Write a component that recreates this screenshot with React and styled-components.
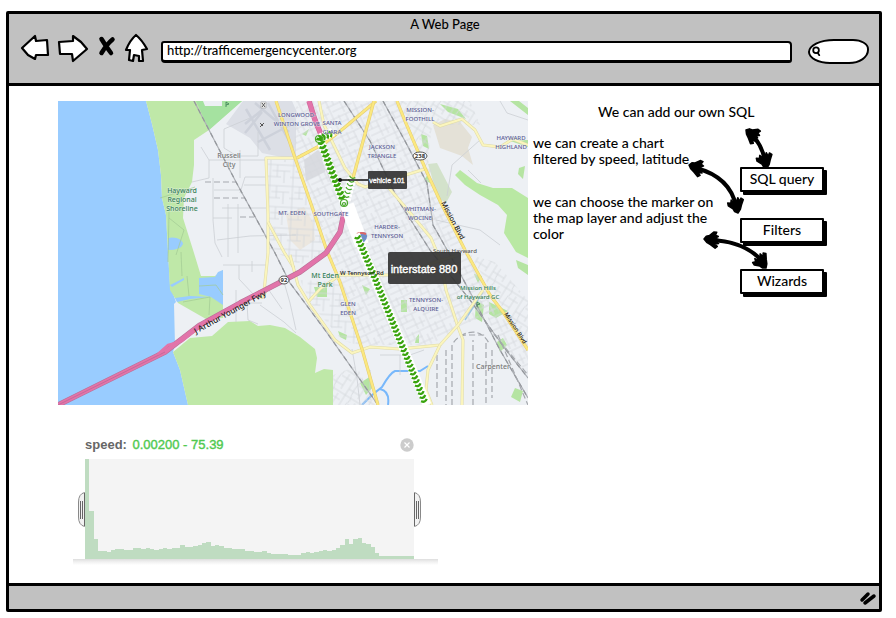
import React from "react";
import styled, { createGlobalStyle } from "styled-components";

const GlobalStyle = createGlobalStyle`
  * { box-sizing: border-box; }
  body { margin: 0; background: #fff; color: #000; font: 500 14px/16px Lato, "Open Sans", sans-serif; }
  button, input { font: inherit; color: inherit; }
`;

const Browser = styled.div`
  display: flex;
  flex-direction: column;
  min-height: calc(100vh - 17px);
  margin: 11px 14px 6px 6px;
  border: 3px solid #000;
  border-radius: 2px;
`;

const Chrome = styled.header`
  background: #c1c1c1;
  border-bottom: 3px solid #000;
  padding: 3px 10px 19px 12px;
`;

const Title = styled.h1`
  margin: 0;
  font-size: 13px;
  line-height: 14px;
  font-weight: 500;
  text-align: center;
`;

const NavRow = styled.div`
  display: flex;
  align-items: center;
  gap: 16px;
`;

const NavButtons = styled.nav`
  display: flex;
  align-items: center;
  gap: 9px;
  width: 124px;
`;

const NavButton = styled.button`
  flex: none;
  padding: 0;
  border: 0;
  background: none;
  display: block;
  svg { display: block; overflow: visible; }
`;

const Address = styled.input`
  flex: 1;
  min-width: 0;
  height: 22px;
  margin-top: 8px;
  padding: 0 4px 2px;
  border: 2px solid #000;
  border-bottom-width: 3px;
  border-radius: 3px 4px 3px 4px;
  background: #fff;
  font-size: 13px;
`;

const Search = styled.label`
  flex: none;
  display: flex;
  align-items: center;
  width: 61px;
  height: 25px;
  margin-top: 8px;
  padding-left: 2px;
  border: 2px solid #000;
  border-radius: 26px 16px 20px 22px / 13px 10px 14px 12px;
  background: #fff;
`;

const SearchInput = styled.input`
  min-width: 0;
  width: 100%;
  border: 0;
  outline: 0;
  background: transparent;
`;

const Page = styled.main`
  flex: 1;
  display: grid;
  grid-template-columns: minmax(0, 470fr) minmax(0, 351fr);
  align-items: start;
  padding: 15px 0 18px 49px;
`;

const MapFigure = styled.figure`
  margin: 0;
  svg { display: block; width: 100%; }
`;

const Filter = styled.section`
  margin: 32px 90px 0 15px;
`;

const FilterHead = styled.div`
  display: flex;
  align-items: center;
  justify-content: space-between;
  height: 16px;
  padding: 0 24px 0 12px;
  font-family: "Liberation Sans", Arial, sans-serif;
`;

const FilterName = styled.h2`
  margin: 0;
  font-size: 13px;
  line-height: 16px;
  color: #666;
  span { color: #4fc94f; margin-left: 2px; font-weight: 400; -webkit-text-stroke: 0.4px #4fc94f; }
`;

const Close = styled.button`
  width: 14px;
  height: 14px;
  padding: 0;
  border: 0;
  background: none;
  svg { display: block; }
`;

const Plot = styled.div`
  position: relative;
  height: 100px;
  margin: 6px 24px 0 12px;
  background: #f4f4f4;
  & > svg { display: block; width: 100%; height: 100%; }
`;

const Handle = styled.button`
  position: absolute;
  top: 33px;
  ${(p) => (p.$side === "left" ? "right: 100%;" : "left: 100%;")}
  width: 7px;
  height: 35px;
  padding: 0;
  border: 0;
  background: none;
  svg { display: block; transform: ${(p) => (p.$side === "left" ? "none" : "scaleX(-1)")}; }
`;

const Shelf = styled.div`
  height: 6px;
  background: linear-gradient(#dedede, #eee 40%, #fff);
`;

const Notes = styled.section`
  position: relative;
  padding: 3px 0 0 5px;
`;

const Intro = styled.p`
  margin: 0 0 15px 65px;
`;

const NoteGrid = styled.div`
  display: grid;
  grid-template-columns: 180px 84px;
  column-gap: 27px;
`;

const NoteList = styled.div`
  display: grid;
  align-content: start;
  gap: 27px;
  p { margin: 0; white-space: nowrap; }
`;

const Actions = styled.div`
  display: flex;
  flex-direction: column;
  gap: 26px;
  padding-top: 32px;
`;

const Action = styled.button`
  height: 25px;
  padding: 0 0 1px;
  border: 2px solid #000;
  border-radius: 1px;
  background: #fff;
  box-shadow: 3px 3px 0 #000;
  font-weight: 500;
`;

const ArrowLayer = styled.svg`
  position: absolute;
  top: 0;
  left: 0;
  pointer-events: none;
`;

const Status = styled.footer`
  display: flex;
  justify-content: flex-end;
  align-items: center;
  height: 26px;
  padding-right: 2px;
  border-top: 3px solid #000;
  background: #c1c1c1;
`;

/* ---------- map ---------- */

function chevrons(points, step, size) {
  const out = [];
  let carry = 0;
  for (let i = 1; i < points.length; i++) {
    const [x1, y1] = points[i - 1];
    const [x2, y2] = points[i];
    const len = Math.hypot(x2 - x1, y2 - y1);
    const a = (Math.atan2(y2 - y1, x2 - x1) * 180) / Math.PI;
    let d = carry;
    for (; d < len; d += step) {
      const x = x1 + ((x2 - x1) * d) / len;
      const y = y1 + ((y2 - y1) * d) / len;
      out.push(
        <path
          key={`${i}-${d}`}
          transform={`translate(${x.toFixed(1)} ${y.toFixed(1)}) rotate(${a.toFixed(0)})`}
          d={`M-1.5 ${-size}Q1.8 0 -1.5 ${size}`}
        />
      );
    }
    carry = d - len;
  }
  return out;
}

const LABELS = [
  ["#5b5c94", 6, 297, 117, "LONGWOOD-", "WINTON GROVE"],
  ["#5b5c94", 6, 332, 125, "SANTA", "CLARA"],
  ["#5b5c94", 6, 420, 112, "MISSION-", "FOOTHILL"],
  ["#5b5c94", 6, 382, 149, "JACKSON", "TRIANGLE"],
  ["#5b5c94", 6, 511, 140, "HAYWARD", "HIGHLAND"],
  ["#5b5c94", 6, 292, 215, "MT. EDEN"],
  ["#5b5c94", 6, 331, 216, "SOUTHGATE"],
  ["#5b5c94", 6, 420, 211, "WHITMAN-", "WOCINE"],
  ["#5b5c94", 6, 387, 229, "HARDER-", "TENNYSON"],
  ["#5b5c94", 6, 348, 306, "GLEN", "EDEN"],
  ["#5b5c94", 6, 426, 302, "TENNYSON-", "ALQUIRE"],
  ["#777", 7, 229, 158, "Russell", "City"],
  ["#777", 7, 493, 369, "Carpenter"],
  ["#555", 6, 455, 253, "South Hayward"],
  ["#338055", 7, 182, 193, "Hayward", "Regional", "Shoreline"],
  ["#338055", 7, 325, 278, "Mt Eden", "Park"],
  ["#338055", 6, 478, 290, "Mission Hills", "of Hayward GC"],
];

const STREET_ZONES = [
  ["a", "M296 101H397L425 168L465 250L500 310L463 325L430 345H362L327 251L294 155Z"],
  ["b", "M268 160H295L312 205L327 251L300 265L268 248Z"],
  ["c", "M398 101H470L480 125H432L428 160L440 200L424 168Z"],
  ["b", "M300 280L340 282L360 346L342 340L312 305Z"],
  ["c", "M470 255L495 262L528 300V348Z"],
  ["a", "M480 300L503 314L528 352V375L495 335Z"],
  ["c", "M333 375L357 366L375 405H333Z"],
];

const ROADS = [
  "M276 101L294 155L310 201L327 251L340 282L362 349L378 405",
  "M297 158L325 143L344 128L376 101",
  "M374 101L353 178",
  "M397 101L405 121L425 168L441 203L465 250L490 295L503 312L528 350",
];

const LANES = [
  "M296 158H266L268 215V253L264 292L260 298",
  "M268 222L284 252L294 268",
  "M319 101L324 125L345 168L358 184L365 187L396 178L425 169",
  "M388 187L412 215L431 238L441 262L446 290L458 327L463 340L462 405",
  "M290 255L298 285L310 305L335 340L352 353L370 347L400 349L440 345L458 325L483 290",
  "M309 301L320 289L340 275H390L414 272L430 264L455 256",
  "M440 345L428 370L426 390L432 405",
  "M433 122L440 126L462 119L475 130L483 145L500 147L513 139L528 145",
];

const RAILS = [
  "M194 101L236 182L275 253L290 283L325 330L378 405",
  "M344 101L370 141L398 200L430 250L470 300L506 350L528 378",
  "M383 101L405 141L427 183L433 225L450 255L470 292L500 350L528 398",
];

const STREETS =
  "M201 147L209 160V178L192 182M209 160H266M213 178V220L215 243L222 257M224 129V148L237 156H258V132M240 178V150M224 129L250 118M214 190H240M222 208H266M240 193L245 177H266M244 185H266M228 204V257M238 204V253M213 218H232M217 240L250 236L296 235M223 265H266M239 265V279L254 295M252 261V272M236 290V322M247 303L248 320L258 324M260 305L284 322L296 333M266 286L282 309M282 275L290 303L296 330M247 303H262M436 220L480 230L500 245M468 170L481 183M480 140L452 165L447 196M500 101L507 113L528 120M370 370V400M352 349L357 378L360 405M400 355V375M380 355H410L424 350";

const JARTHUR = "M58 405L165 352L200 325L240 303L300 272L326 253L340 232L345 208";

function TrafficMap() {
  return (
    <svg viewBox="58 101 470 304" role="img" aria-label="Traffic map of Hayward with vehicle 101 on interstate 880">
      <defs>
        <pattern id="a" width="25" height="19" patternUnits="userSpaceOnUse" patternTransform="rotate(-25)">
          <path d="M0 2H25M0 8H16M4 14H25M2 0V19M8 0V8M15 2V19M21 8V19" fill="none" stroke="#d5d8dd" strokeWidth="0.8" />
        </pattern>
        <pattern id="b" width="23" height="21" patternUnits="userSpaceOnUse" patternTransform="rotate(3)">
          <path d="M0 3H23M5 9H23M0 15H14M3 0V21M10 3V15M17 9V21" fill="none" stroke="#d3d7dc" strokeWidth="0.8" />
        </pattern>
        <pattern id="c" width="22" height="20" patternUnits="userSpaceOnUse" patternTransform="rotate(-58)">
          <path d="M0 2H22M0 9Q11 5 22 9M5 15H22M2 0V20M9 2V15M17 9V20" fill="none" stroke="#d4d8dc" strokeWidth="0.8" />
        </pattern>
      </defs>
      <rect x="58" y="101" width="470" height="304" fill="#edf0f4" />
      <path d="M58 101H146L152 124L158 150L161 175L162 198L166 215L168 252L170 285L176 302L174 304L175 345L173 352L180 370L188 405H58Z" fill="#99ccff" />
      <path d="M146 101H242L209 130L194 140V165L192 182L184 198L183 218L194 253L201 276L215 276L223 270V318L206 319L178 303L170 290L168 252L166 215L162 198L161 175L158 150L152 124Z" fill="#bfe8a8" />
      <path d="M196 101H242L209 130Z" fill="#a5e2a0" />
      <path d="M203 101H222V106H205Z" fill="#edf0f4" />
      <path d="M199 278L215 277L218 272L223 270V305L211 297L199 294ZM168 238C176 236 183 240 183 244Q181 250 168 250ZM170 285L184 278L184 280L172 287ZM175 298L190 296L210 297L190 299L177 302Z" fill="#99ccff" />
      <path d="M173 352L190 338L212 336L228 322L250 321L258 326L270 325L285 328L300 337L315 349L317 358L315 373L324 369L333 370V405H188L180 370Z" fill="#bfe8a8" />
      <path d="M243 101H292L296 110V160L262 153L250 138L226 124Z" fill="#dcdfe6" />
      <path d="M246 109L270 150M255 103L289 132M245 124L262 110M258 142L290 125M268 103L293 148M262 112L245 133" stroke="#cdd1da" strokeWidth="2.5" fill="none" />
      <path d="M304 160L318 150L328 160L325 172L306 181ZM322 160L330 182L337 180L326 152Z" fill="#d9dbe0" />
      <path d="M433 125L445 119L460 122L472 137L468 148L473 165L462 156L440 148Z" fill="#e4e1d7" />
      <path d="M428 164L437 163L452 192L446 203L438 198Z" fill="#d3e2cb" />
      <path d="M286 214L304 207L313 222L315 240L300 250L290 240Z" fill="#ece7df" />
      <path d="M460 170L477 183L493 188H512L528 198V258L516 252L504 233L507 215L498 205L480 195L465 185L455 175Z" fill="#b9e8a3" />
      <path d="M440 104L458 109L466 119L448 112ZM507 140H528V147ZM519 168L525 166L523 179L518 174ZM302 134L309 129L306 136ZM421 134L427 136L429 149L423 146ZM424 180L428 174L430 183ZM362 285L370 289L366 295ZM401 300H407V312H401ZM314 287H327V297H317ZM416 338L419 334V343L415 343ZM338 331L347 335L346 340L340 337ZM360 383L371 376L373 387L366 395ZM476 300L484 305L482 322L475 318ZM489 302L508 311L496 318L489 314ZM497 342L503 338L507 345L500 352ZM474 274L482 276L478 283ZM515 388L523 391L520 402L511 397ZM516 260L528 265V275L518 268ZM510 101L528 115V108L519 101Z" fill="#b5e4a2" />
      <path d="M362 405Q370 396 382 387Q390 373 395 371H420L428 366M380 389Q390 391 388 405" fill="none" stroke="#78b8fb" strokeWidth="2" />
      <path d="M465 320L483 292" stroke="#9dc6df" strokeWidth="1.5" />
      {STREET_ZONES.map(([id, d]) => (
        <path key={d} d={d} fill={`url(#${id})`} />
      ))}
      <path d={STREETS} fill="none" stroke="#cbcfd4" strokeWidth="0.8" />
      <path d="M181 252L182 276M168 262L169 212M176 255L184 230L169 218M187 276L189 296M199 286L216 285L223 295M160 198L180 192L195 187M183 302L210 297L209 315" fill="none" stroke="#a2ca94" strokeWidth="0.7" />
      <g fill="none" stroke="#adb0b5">
        {RAILS.map((d) => (
          <g key={d}>
            <path d={d} strokeWidth="1.2" />
            <path d={d} strokeWidth="1.2" strokeDasharray="5 4" stroke="#94979c" />
          </g>
        ))}
        <path d="M205 182H236M214 198H244M240 217H254M437 355V398M446 350V405M452 405V345Q458 334 470 335H485M460 336Q480 325 490 345M473 405V340M486 343V405M492 350V398M498 335L528 405M488 327L528 375" strokeWidth="1.2" strokeDasharray="6 3" stroke="#a5a8ad" />
      </g>
      <g fill="none" strokeLinejoin="round">
        {LANES.map((d) => (
          <g key={d}>
            <path d={d} stroke="#dedaa8" strokeWidth="3" />
            <path d={d} stroke="#fbf5bd" strokeWidth="2" />
          </g>
        ))}
        {ROADS.map((d) => (
          <g key={d}>
            <path d={d} stroke="#e5cd70" strokeWidth="3.2" />
            <path d={d} stroke="#fbe880" strokeWidth="2.2" />
          </g>
        ))}
        <path d="M258 291L270 287L262 299Z" fill="#fbf5bd" stroke="#e3dba0" />
        <path d={JARTHUR} stroke="#b97297" strokeWidth="5.4" />
        <path d={JARTHUR} stroke="#e274aa" strokeWidth="4.2" />
        <path d="M58 405L165 352" stroke="#b96691" strokeWidth="0.7" />
        <path d="M158 354L168 345L182 341L200 327" stroke="#e274aa" strokeWidth="2.5" />
        <path d="M309 101L315 120L322 137" stroke="#cf6598" strokeWidth="5.4" />
        <path d="M309 101L315 120L322 137" stroke="#e274aa" strokeWidth="4.2" />
        <path d="M319 137L332 172L344 203" stroke="#fff" strokeWidth="8" />
        <path d="M347 205L362 245" stroke="#fff" strokeWidth="14" />
        <path d="M356 233L427 405" stroke="#fff" strokeWidth="9" />
        <path d="M352 178L346 201M320 138L333 132" stroke="#fff" strokeWidth="9" strokeDasharray="3 1" />
      </g>
      <path d="M360 233Q362 231 366 233Q370 239 360 245Q355 240 360 233Z" fill="#6e8ec7" />
      <path d="M357 234Q361 232 366 234" stroke="#d66" strokeWidth="2" fill="none" />
      <path d="M356 234L366 260" stroke="#fff" strokeWidth="8" />
      <g fill="none" stroke="#38a30d" strokeWidth="2.8">
        {chevrons([[320, 139], [332, 172], [343, 200]], 4.5, 3.2)}
      </g>
      <g fill="none" stroke="#38a30d" strokeWidth="2.3">
        {chevrons([[358, 238], [374, 276], [399, 338], [426, 405]], 4.2, 3)}
        {chevrons([[321, 138], [333, 133]], 3.6, 3)}
      </g>
      <g fill="none" stroke="#4aaa2a" strokeWidth="1.2">
        {chevrons([[352, 178], [345, 200]], 4, 3)}
        <circle cx="344" cy="203" r="3.5" />
        <circle cx="344" cy="204" r="1.5" />
        <circle cx="319" cy="139" r="3.5" />
      </g>
      <g fontFamily='"Noto Sans", sans-serif' textAnchor="middle" paintOrder="stroke" stroke="#f0f2f5" strokeWidth="1" strokeOpacity="0.6">
        {LABELS.map(([fill, size, x, y, ...lines]) => (
          <text key={lines[0] + y} x={x} y={y} fill={fill} fontSize={size}>
            {lines.map((t, i) => (
              <tspan key={t} x={x} dy={i ? 9 : 0}>{t}</tspan>
            ))}
          </text>
        ))}
      </g>
      <g fontFamily='"Noto Sans", sans-serif' fontSize="7" fill="#222">
        <text transform="translate(196 334) rotate(-29)" fontSize="8">J Arthur Younger Fwy</text>
        <text transform="translate(441 203) rotate(62)">Mission Blvd</text>
        <text transform="translate(504 314) rotate(57)" fontSize="6">Mission Blvd</text>
        <text x="340" y="275" fontSize="6">W Tennyson Rd</text>
      </g>
      <g fill="#fff" stroke="#555" strokeWidth="1" fontFamily='"Noto Sans", sans-serif' fontSize="6" fontWeight="700" textAnchor="middle">
        <ellipse cx="284" cy="280" rx="5" ry="4" />
        <text x="284" y="282" fill="#333" stroke="none">92</text>
        <ellipse cx="420" cy="156" rx="7" ry="4" />
        <text x="420" y="158" fill="#333" stroke="none">238</text>
      </g>
      <path d="M261 102H266V108H261Z" fill="#f5f5f5" stroke="#888" strokeWidth="0.5" />
      <path d="M262 103L265 107M265 103L262 107M260 127L264 123M260 123L263 126" stroke="#555" />
      <path d="M226 107V102L229 104L226 105M477 307V302L480 304L477 305" stroke="#397e52" fill="none" strokeWidth="0.8" />
      <path d="M340 180H368" stroke="#111" strokeWidth="1.5" />
      <circle cx="340" cy="180" r="2" fill="#111" />
      <g fontFamily='"Liberation Sans", Arial, sans-serif' fill="#fff" textAnchor="middle">
        <rect x="368" y="171" width="39" height="18" rx="1" fill="#333" fillOpacity="0.92" />
        <text x="387" y="183" fontSize="7" stroke="#fff" strokeWidth="0.3">vehicle 101</text>
        <rect x="388" y="252" width="73" height="32" rx="2" fill="#333" fillOpacity="0.92" />
        <text x="424" y="273" fontSize="11" stroke="#fff" strokeWidth="0.4">interstate 880</text>
      </g>
    </svg>
  );
}

/* ---------- histogram ---------- */

const SPEEDS = [
  302, 146, 59, 25, 24, 21, 26, 31, 30, 26, 28, 33, 32, 30, 32, 29, 28, 30, 33, 29, 32, 33, 43, 35, 37, 39, 43, 47, 50,
  38, 41, 38, 34, 33, 29, 29, 29, 24, 23, 22, 22, 23, 17, 14, 15, 16, 16, 13, 13, 13, 18, 20, 18, 21, 23, 27, 24, 26, 32,
  42, 59, 45, 60, 63, 47, 44, 37, 18, 8, 8, 8, 8, 8, 8, 8, 8,
];

const histogramPath = `M0 302${SPEEDS.map((v, i) => `V${302 - v}H${i + 1}`).join("")}V302Z`;

function Grip({ side }) {
  return (
    <Handle type="button" $side={side} aria-label={`${side} range handle`}>
      <svg width="7" height="35" viewBox="0 0 7 35">
        <path d="M6.5 0.5Q0.5 2 0.5 10V25Q0.5 33 6.5 34.5Z" fill="#f2f2f2" stroke="#888" />
        <path d="M2.5 9V27M4.5 9V27M6.5 1V34" stroke="#666" />
      </svg>
    </Handle>
  );
}

/* ---------- hand-drawn arrows ---------- */

const HEAD =
  "M0 0L-3 -3L-7 -5L-12 -8L-14 -6L-11 -4L-15 -3L-12 -1L-14 1L-11 2L-14 4L-11 5L-12 8L-9 8L-5 4L-2 3Z";

function SketchArrow({ curve, start, end }) {
  return (
    <g fill="#000" stroke="#000" strokeLinejoin="round" strokeLinecap="round">
      <path d={curve} fill="none" strokeWidth="4" />
      <path d={HEAD} strokeWidth="1.5" transform={`translate(${start[0]} ${start[1]}) rotate(${start[2]})`} />
      <path d={HEAD} strokeWidth="1.5" transform={`translate(${end[0]} ${end[1]}) rotate(${end[2]})`} />
    </g>
  );
}

const outline = { fill: "#fff", stroke: "#000", strokeWidth: 2.2, strokeLinejoin: "round" };

export default function App() {
  return (
    <>
      <GlobalStyle />
      <Browser>
        <Chrome>
          <Title>A Web Page</Title>
          <NavRow>
            <NavButtons aria-label="Browser">
              <NavButton type="button" aria-label="Back">
                <svg width="28" height="26" viewBox="21 34 28 26">
                  <path {...outline} d="M22 47L35 35L36 40L47 39L48 54L36 54L35 58L28 54Z" />
                </svg>
              </NavButton>
              <NavButton type="button" aria-label="Forward">
                <svg width="31" height="26" viewBox="58 34 31 26">
                  <path {...outline} d="M59 41L73 40V35L81 41L87 48L73 60L72 53L60 53Z" />
                </svg>
              </NavButton>
              <NavButton type="button" aria-label="Stop">
                <svg width="18" height="22" viewBox="99 37 18 22">
                  <path d="M102.500 39Q106 45 112 53M113.500 39.500Q108 44 102.500 53" fill="none" stroke="#000" strokeWidth="4.500" strokeLinecap="round" />
                </svg>
              </NavButton>
              <NavButton type="button" aria-label="Home">
                <svg width="22" height="28" viewBox="125 33 22 28">
                  <path {...outline} d="M136 34Q142 39 147 48L142 49L143 60H139V55L134 54L133 60L129 59L130 49L126 49Q130 39 136 34Z" />
                </svg>
              </NavButton>
            </NavButtons>
            <Address aria-label="Address" defaultValue="http://trafficemergencycenter.org" />
            <Search>
              <svg width="12" height="13" viewBox="0 0 12 13" fill="none" stroke="#000" strokeWidth="2.200" strokeLinecap="round">
                <circle cx="5" cy="5" r="3.500" />
                <path d="M7 8L9 11" />
              </svg>
              <SearchInput type="search" aria-label="Search" />
            </Search>
          </NavRow>
        </Chrome>

        <Page>
          <div>
            <MapFigure>
              <TrafficMap />
            </MapFigure>
            <Filter>
              <FilterHead>
                <FilterName>
                  speed: <span>0.00200 - 75.39</span>
                </FilterName>
                <Close type="button" aria-label="Remove filter">
                  <svg width="14" height="14" viewBox="0 0 14 14">
                    <circle cx="7" cy="7" r="6.700" fill="#ccc" />
                    <path d="M4.500 4.500L9.500 9.500M9.500 4.500L4.500 9.500" stroke="#fff" strokeWidth="1.200" />
                  </svg>
                </Close>
              </FilterHead>
              <Plot>
                <svg viewBox="0 0 76 302" preserveAspectRatio="none" role="img" aria-label="Speed histogram">
                  <path d={histogramPath} fill="#bfdcc1" shapeRendering="crispEdges" />
                </svg>
                <Grip side="left" />
                <Grip side="right" />
              </Plot>
              <Shelf />
            </Filter>
          </div>

          <Notes>
            <Intro>We can add our own SQL</Intro>
            <NoteGrid>
              <NoteList>
                <p>
                  we can create a chart
                  <br />
                  filtered by speed, latitude
                </p>
                <p>
                  we can choose the marker on
                  <br />
                  the map layer and adjust the
                  <br />
                  color
                </p>
              </NoteList>
              <Actions>
                <Action type="button">SQL query</Action>
                <Action type="button">Filters</Action>
                <Action type="button">Wizards</Action>
              </Actions>
            </NoteGrid>
            <ArrowLayer width="300" height="180" viewBox="528 101 300 180" aria-hidden="true">
              <SketchArrow curve="M751 134Q761 143 765 160" start={[746, 130, 218]} end={[767, 168, 76]} />
              <SketchArrow curve="M696 168Q730 177 736 206" start={[689, 165, 200]} end={[738, 213, 78]} />
              <SketchArrow curve="M710 240Q745 241 763 262" start={[704, 239, 186]} end={[766, 268, 56]} />
            </ArrowLayer>
          </Notes>
        </Page>

        <Status>
          <svg width="18" height="16" viewBox="859 592 18 16" fill="none" stroke="#000" strokeWidth="3.500" strokeLinecap="round" aria-hidden="true">
            <path d="M862 602L868 596M865 605L874 598" />
          </svg>
        </Status>
      </Browser>
    </>
  );
}
